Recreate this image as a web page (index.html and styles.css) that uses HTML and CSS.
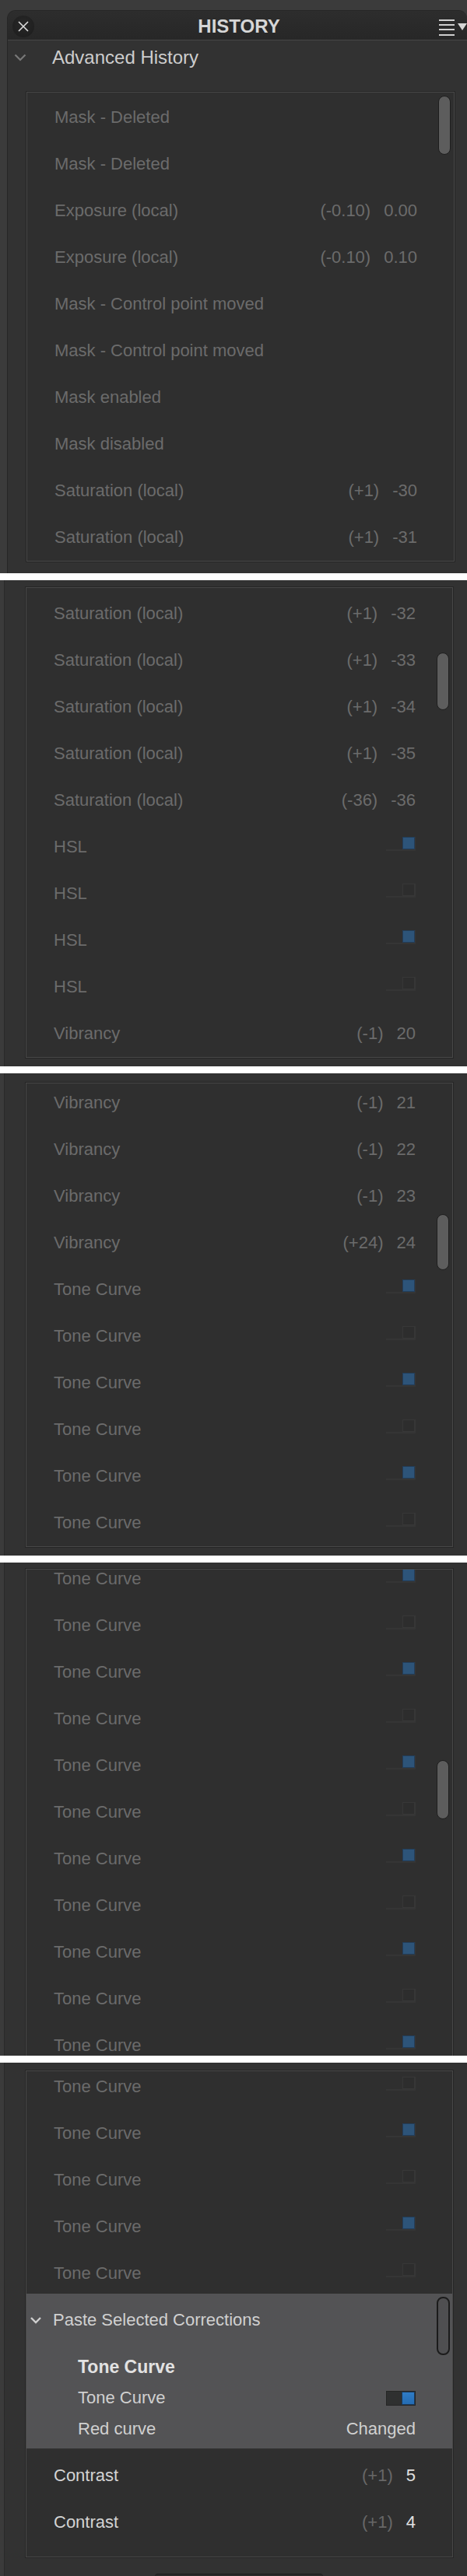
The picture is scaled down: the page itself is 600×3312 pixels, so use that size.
FILE: index.html
```html
<!DOCTYPE html>
<html lang="en">
<head>
  <meta charset="UTF-8" />
  <title>History</title>
  <link rel="stylesheet" href="styles.css">
</head>
<body>

  <!-- shot 1 : top of the panel -->
  <div class="shot shot-1">
    <div class="panel panel-top">
      <div class="panel-head">
        <div class="close-btn">
          <svg width="14" height="14" viewBox="0 0 14 14"><path d="M1 1L13 13M13 1L1 13" stroke="#dcdcdc" stroke-width="1.6" fill="none"/></svg>
        </div>
        <div class="panel-title">HISTORY</div>
        <svg class="menu-icon" width="36" height="22" viewBox="0 0 36 22">
          <rect x="0" y="1" width="20" height="2" fill="#cfcfcf"/>
          <rect x="0" y="7" width="20" height="2" fill="#cfcfcf"/>
          <rect x="0" y="13" width="20" height="2" fill="#cfcfcf"/>
          <rect x="0" y="20" width="20" height="2" fill="#cfcfcf"/>
          <path d="M24 6H36L30 15Z" fill="#d6d6d6"/>
        </svg>
      </div>
      <div class="section-head">
        <svg class="chev" width="16" height="10" viewBox="0 0 16 10"><path d="M1.5 1.5L8 8L14.5 1.5" stroke="#787878" stroke-width="2.2" fill="none"/></svg>
        <span>Advanced History</span>
      </div>
      <div class="box">
        <div class="thumb thumb-1"></div>
        <div class="list off-1">
          <div class="row"><span class="name">Mask - Deleted</span></div>
          <div class="row"><span class="name">Mask - Deleted</span></div>
          <div class="row"><span class="name">Exposure (local)</span><span class="delta">(-0.10)</span><span class="val">0.00</span></div>
          <div class="row"><span class="name">Exposure (local)</span><span class="delta">(-0.10)</span><span class="val">0.10</span></div>
          <div class="row"><span class="name">Mask - Control point moved</span></div>
          <div class="row"><span class="name">Mask - Control point moved</span></div>
          <div class="row"><span class="name">Mask enabled</span></div>
          <div class="row"><span class="name">Mask disabled</span></div>
          <div class="row"><span class="name">Saturation (local)</span><span class="delta">(+1)</span><span class="val">-30</span></div>
          <div class="row"><span class="name">Saturation (local)</span><span class="delta">(+1)</span><span class="val">-31</span></div>
        </div>
      </div>
    </div>
  </div>

  <!-- shot 2 -->
  <div class="shot shot-2">
    <div class="panel">
      <div class="box">
        <div class="thumb thumb-2"></div>
        <div class="list off-2">
          <div class="row"><span class="name">Saturation (local)</span><span class="delta">(+1)</span><span class="val">-32</span></div>
          <div class="row"><span class="name">Saturation (local)</span><span class="delta">(+1)</span><span class="val">-33</span></div>
          <div class="row"><span class="name">Saturation (local)</span><span class="delta">(+1)</span><span class="val">-34</span></div>
          <div class="row"><span class="name">Saturation (local)</span><span class="delta">(+1)</span><span class="val">-35</span></div>
          <div class="row"><span class="name">Saturation (local)</span><span class="delta">(-36)</span><span class="val">-36</span></div>
          <div class="row"><span class="name">HSL</span><span class="toggle on"></span></div>
          <div class="row"><span class="name">HSL</span><span class="toggle"></span></div>
          <div class="row"><span class="name">HSL</span><span class="toggle on"></span></div>
          <div class="row"><span class="name">HSL</span><span class="toggle"></span></div>
          <div class="row"><span class="name">Vibrancy</span><span class="delta">(-1)</span><span class="val">20</span></div>
        </div>
      </div>
    </div>
  </div>

  <!-- shot 3 -->
  <div class="shot shot-3">
    <div class="panel">
      <div class="box">
        <div class="thumb thumb-3"></div>
        <div class="list off-3">
          <div class="row"><span class="name">Vibrancy</span><span class="delta">(-1)</span><span class="val">21</span></div>
          <div class="row"><span class="name">Vibrancy</span><span class="delta">(-1)</span><span class="val">22</span></div>
          <div class="row"><span class="name">Vibrancy</span><span class="delta">(-1)</span><span class="val">23</span></div>
          <div class="row"><span class="name">Vibrancy</span><span class="delta">(+24)</span><span class="val">24</span></div>
          <div class="row"><span class="name">Tone Curve</span><span class="toggle on"></span></div>
          <div class="row"><span class="name">Tone Curve</span><span class="toggle"></span></div>
          <div class="row"><span class="name">Tone Curve</span><span class="toggle on"></span></div>
          <div class="row"><span class="name">Tone Curve</span><span class="toggle"></span></div>
          <div class="row"><span class="name">Tone Curve</span><span class="toggle on"></span></div>
          <div class="row"><span class="name">Tone Curve</span><span class="toggle"></span></div>
        </div>
      </div>
    </div>
  </div>

  <!-- shot 4 -->
  <div class="shot shot-4">
    <div class="panel">
      <div class="box">
        <div class="thumb thumb-4"></div>
        <div class="list off-4">
          <div class="row"><span class="name">Tone Curve</span><span class="toggle on"></span></div>
          <div class="row"><span class="name">Tone Curve</span><span class="toggle"></span></div>
          <div class="row"><span class="name">Tone Curve</span><span class="toggle on"></span></div>
          <div class="row"><span class="name">Tone Curve</span><span class="toggle"></span></div>
          <div class="row"><span class="name">Tone Curve</span><span class="toggle on"></span></div>
          <div class="row"><span class="name">Tone Curve</span><span class="toggle"></span></div>
          <div class="row"><span class="name">Tone Curve</span><span class="toggle on"></span></div>
          <div class="row"><span class="name">Tone Curve</span><span class="toggle"></span></div>
          <div class="row"><span class="name">Tone Curve</span><span class="toggle on"></span></div>
          <div class="row"><span class="name">Tone Curve</span><span class="toggle"></span></div>
          <div class="row"><span class="name">Tone Curve</span><span class="toggle on"></span></div>
        </div>
      </div>
    </div>
  </div>

  <!-- shot 5 : bottom, with the selected entry -->
  <div class="shot shot-5">
    <div class="panel">
      <div class="box">
        <div class="list off-5">
          <div class="row"><span class="name">Tone Curve</span><span class="toggle"></span></div>
          <div class="row"><span class="name">Tone Curve</span><span class="toggle on"></span></div>
          <div class="row"><span class="name">Tone Curve</span><span class="toggle"></span></div>
          <div class="row"><span class="name">Tone Curve</span><span class="toggle on"></span></div>
          <div class="row"><span class="name">Tone Curve</span><span class="toggle"></span></div>

          <div class="picked">
            <div class="thumb thumb-hollow"></div>
            <div class="picked-head">
              <svg class="chev" width="16" height="10" viewBox="0 0 16 10"><path d="M2 2L8 8L14 2" stroke="#cfcfcf" stroke-width="2.4" fill="none"/></svg>
              <span>Paste Selected Corrections</span>
            </div>
            <div class="picked-items">
              <div class="sub sub-title">Tone Curve</div>
              <div class="sub"><span class="name">Tone Curve</span><span class="toggle live"></span></div>
              <div class="sub"><span class="name">Red curve</span><span class="val">Changed</span></div>
            </div>
          </div>

          <div class="row live"><span class="name">Contrast</span><span class="delta">(+1)</span><span class="val">5</span></div>
          <div class="row live"><span class="name">Contrast</span><span class="delta">(+1)</span><span class="val">4</span></div>
        </div>
      </div>
      <div class="foot-btn"></div>
    </div>
  </div>

</body>
</html>
```

FILE: styles.css
```css
    html, body {
      margin: 0;
      padding: 0;
      background: #ffffff;
      font-family: "Liberation Sans", Arial, sans-serif;
    }

    .shot {
      overflow: hidden;
      background: #3b3b3b;
    }

    .shot + .shot {
      margin-top: 9px;
    }

    .shot-1 { height: 737px; }
    .shot-2 { height: 625px; }
    .shot-3 { height: 620px; }
    .shot-4 { height: 634px; }
    .shot-5 { height: 660px; }

    .panel {
      margin-left: 5px;
      border-left: 1px solid #292929;
      background: #323232;
      height: 100%;
      box-sizing: border-box;
      overflow: hidden;
    }

    .panel-top {
      margin-left: 9px;
      margin-top: 13px;
      border: 1px solid #262626;
      border-bottom: none;
      border-right: none;
      border-radius: 11px 11px 0 0;
    }

    .panel-head {
      display: flex;
      align-items: center;
      height: 38px;
      padding-top: 3px;
      box-sizing: border-box;
      background: linear-gradient(#2d2d2d, #272727);
      border-bottom: 1px solid #474747;
    }

    .close-btn {
      width: 28px;
      height: 28px;
      margin-left: 6px;
      border-radius: 50%;
      background: radial-gradient(circle at 50% 40%, #282828, #1c1c1c);
      display: flex;
      align-items: center;
      justify-content: center;
    }

    .panel-title {
      flex: 1;
      text-align: center;
      padding-left: 6px;
      color: #d6d6d6;
      font-size: 24px;
      font-weight: bold;
    }

    .menu-icon {
      display: block;
      margin-top: 2px;
    }

    .section-head {
      display: flex;
      align-items: center;
      height: 44px;
      color: #cdcdcd;
      font-size: 24px;
    }

    .section-head .chev {
      margin-left: 8px;
      margin-right: 33px;
    }

    .box {
      position: relative;
      overflow: hidden;
      margin: 9px 18px 0 27px;
      background: #2f2f2f;
      border: 1px solid #474747;
      box-shadow: 0 0 0 1px #262626;
    }

    .shot-1 .box { margin: 22px 16px 0 24px; }
    .shot-3 .box { margin-top: 12px; }
    .shot-4 .box { margin-top: 8px; }
    .shot-5 .box { margin-top: 10px; }

    /* scroll position of each capture */
    .off-1 { margin-top: 2px; }
    .off-2 { margin-top: 3px; }
    .off-3 { margin-top: -5px; }
    .off-4 { margin-top: -18px; }
    .off-5 { margin-top: -10px; padding-bottom: 14px; }

    .row {
      display: flex;
      align-items: center;
      height: 60px;
      padding: 0 47px 0 35px;
      color: #6b6b6b;
      font-size: 22px;
    }

    .name {
      flex: 1;
      white-space: nowrap;
    }

    .delta {
      margin-right: 17px;
    }

    .row.live .name { color: #d3d3d3; }
    .row.live .delta { color: #676767; }
    .row.live .val { color: #e0e0e0; }

    .toggle {
      display: flex;
      justify-content: flex-end;
      width: 38px;
      height: 18px;
      margin-bottom: 8px;
      box-sizing: border-box;
      border-right: 1px solid #363636;
      border-bottom: 2px solid #353535;
    }

    .toggle::after {
      content: "";
      width: 16px;
      height: 16px;
      box-sizing: border-box;
      background: #2d2d2d;
      border: 1px solid #373737;
    }

    .toggle.on::after {
      background: #2d5479;
      border-color: #223d59;
    }

    .toggle.live {
      height: 19px;
      margin-bottom: 0;
      background: #2f3030;
      border: 1px solid #262626;
    }

    .toggle.live::after {
      width: 17px;
      height: 17px;
      background: linear-gradient(#2f7cc6, #256cb3);
      border: 1px solid #1b3a5a;
    }

    .thumb {
      position: absolute;
      right: 4px;
      width: 16px;
      box-sizing: border-box;
      border-radius: 8px;
      background: #5d5d5d;
      border: 1px solid #1e1e1e;
      z-index: 2;
    }

    .thumb-1 { top: 4px; height: 76px; }
    .thumb-2 { top: 83px; height: 74px; }
    .thumb-3 { top: 168px; height: 72px; }
    .thumb-4 { top: 245px; height: 76px; }

    .picked {
      position: relative;
      margin: -4px 0 5px;
      padding-bottom: 5px;
      background: #535355;
      color: #d0d0d0;
    }

    .thumb-hollow {
      top: 4px;
      right: 3px;
      width: 17px;
      height: 75px;
      background: #4f4f51;
      border: 2px solid #1c1c1c;
    }

    .picked-head {
      display: flex;
      align-items: center;
      height: 68px;
      font-size: 22px;
    }

    .picked-head .chev {
      margin-left: 4px;
      margin-right: 14px;
    }

    .picked-items {
      margin-top: 6px;
    }

    .sub {
      display: flex;
      align-items: center;
      height: 40px;
      padding: 0 47px 0 66px;
      font-size: 22px;
    }

    .sub-title {
      font-weight: bold;
      font-size: 23px;
      color: #e2e2e2;
    }

    .foot-btn {
      width: 216px;
      height: 20px;
      margin: 21px 0 0 193px;
      background: #2a2a2a;
      border-top: 1px solid #1c1c1c;
      border-radius: 4px 4px 0 0;
    }
```
